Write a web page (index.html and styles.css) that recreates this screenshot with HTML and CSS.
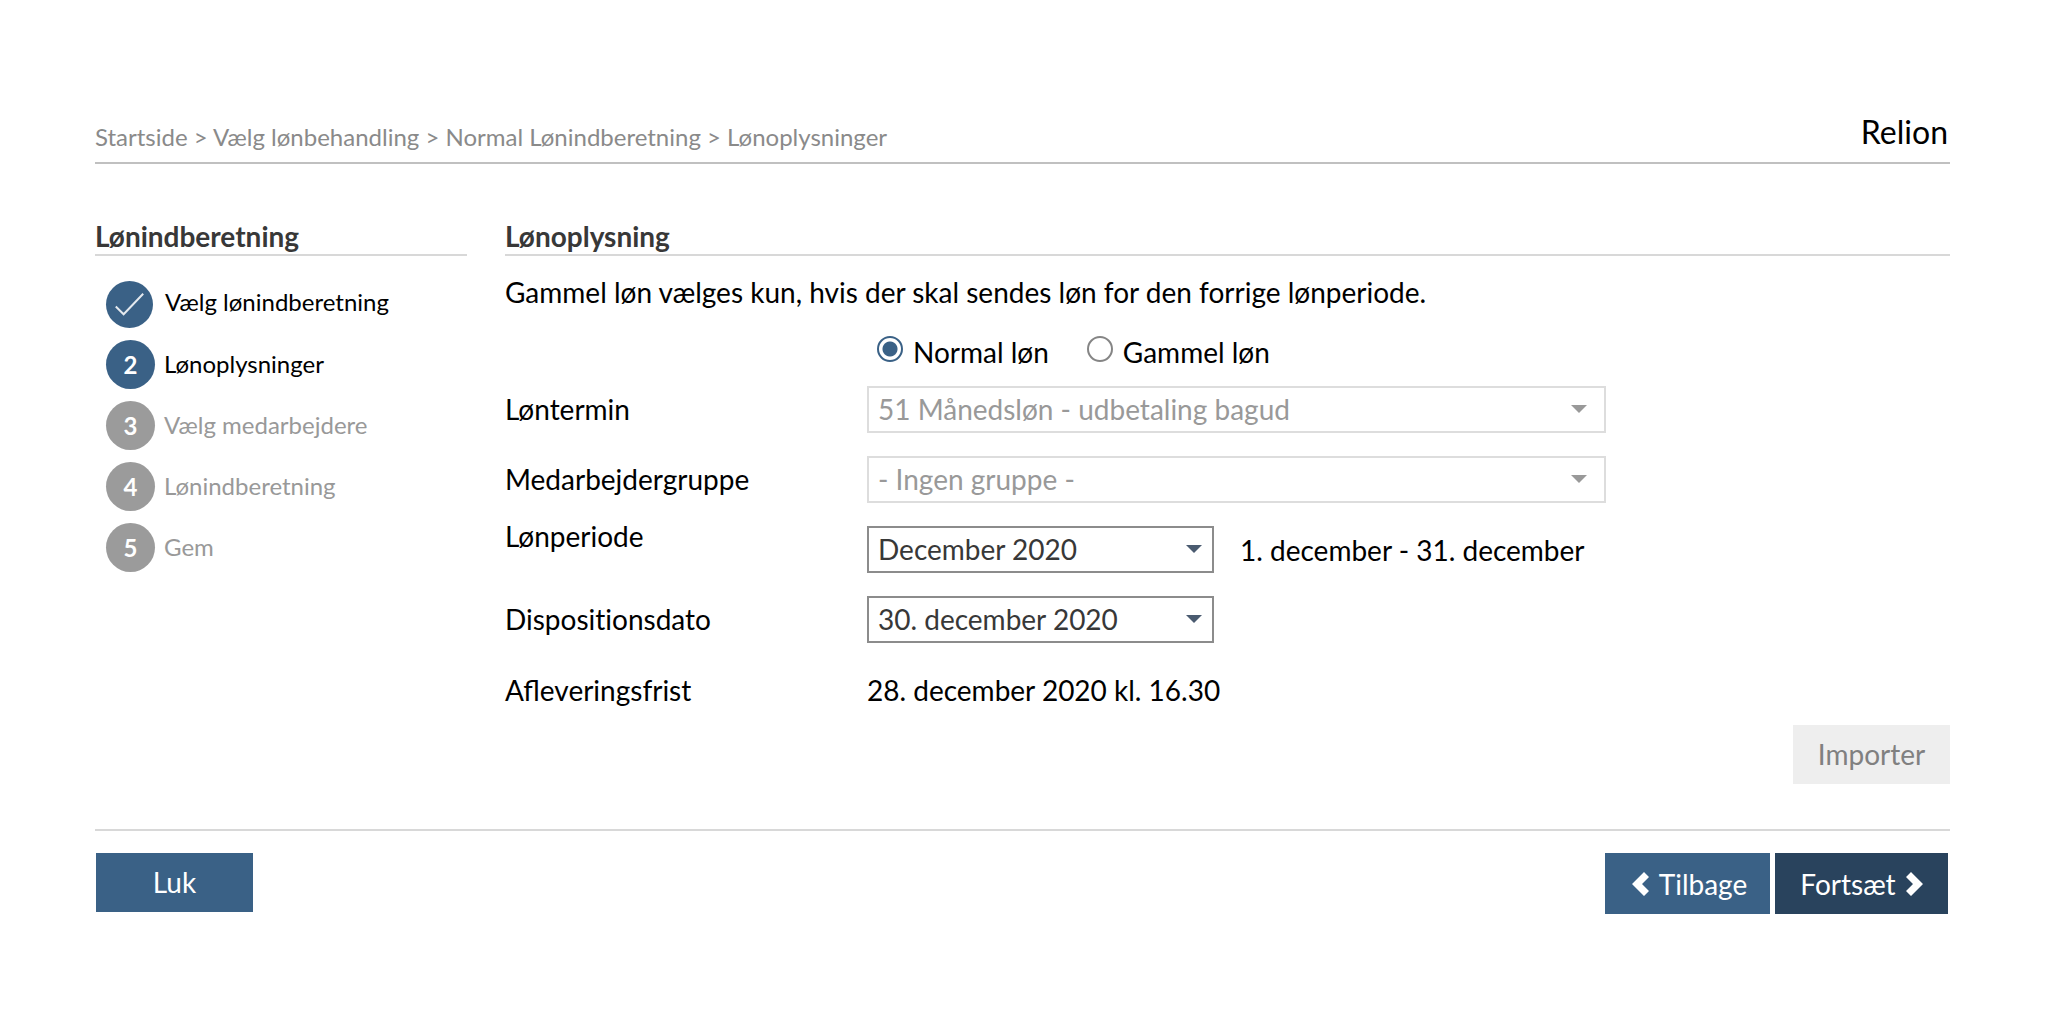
FILE: index.html
```html
<!DOCTYPE html>
<html lang="da">
<head>
  <meta charset="UTF-8" />
  <meta name="viewport" content="width=device-width, initial-scale=1.0"/>
  <title>Lønoplysninger</title>
  <link rel="stylesheet" href="styles.css">
</head>
<body>
  <div class="page">
    <header class="top">
      <nav class="breadcrumb">
        <a href="#">Startside</a> &gt; <a href="#">Vælg lønbehandling</a> &gt; <a href="#">Normal Lønindberetning</a> &gt; <a href="#">Lønoplysninger</a>
      </nav>
      <div class="company">Relion</div>
    </header>

    <div class="content">
      <aside class="sidebar">
        <h2>Lønindberetning</h2>
        <ol class="steps">
          <li class="done">
            <span class="circle">
              <svg viewBox="0 0 48 48"><path d="M10 26l8 8 20-21"/></svg>
            </span>
            <span class="step-name">Vælg lønindberetning</span>
          </li>
          <li class="active"><span class="circle">2</span><span class="step-name">Lønoplysninger</span></li>
          <li><span class="circle">3</span><span class="step-name">Vælg medarbejdere</span></li>
          <li><span class="circle">4</span><span class="step-name">Lønindberetning</span></li>
          <li><span class="circle">5</span><span class="step-name">Gem</span></li>
        </ol>
      </aside>

      <main class="main">
        <h2>Lønoplysning</h2>
        <p class="intro">Gammel løn vælges kun, hvis der skal sendes løn for den forrige lønperiode.</p>

        <form id="salaryForm">
          <div class="radios">
            <label><input type="radio" name="type" checked> Normal løn</label>
            <label><input type="radio" name="type"> Gammel løn</label>
          </div>

          <div class="fields">
            <label for="term">Løntermin</label>
            <div class="select wide disabled">
              <select id="term" disabled><option>51 Månedsløn - udbetaling bagud</option></select>
            </div>

            <label for="group">Medarbejdergruppe</label>
            <div class="select wide disabled">
              <select id="group" disabled><option>- Ingen gruppe -</option></select>
            </div>

            <label for="period" class="label-top">Lønperiode</label>
            <div class="period">
              <div class="select">
                <select id="period"><option>December 2020</option></select>
              </div>
              <span>1. december - 31. december</span>
            </div>

            <label for="date">Dispositionsdato</label>
            <div class="select">
              <select id="date"><option>30. december 2020</option></select>
            </div>

            <span>Afleveringsfrist</span>
            <span>28. december 2020 kl. 16.30</span>
          </div>

          <div class="import">
            <button type="button" class="btn btn-disabled" disabled>Importer</button>
          </div>
        </form>
      </main>
    </div>

    <footer class="bottom">
      <button type="button" class="btn">Luk</button>
      <div class="nav-buttons">
        <button type="button" class="btn btn-nav btn-back">
          <svg viewBox="0 0 17 24"><path d="M12 0l5 5-7 7 7 7-5 5L0 12z"/></svg>
          Tilbage
        </button>
        <button type="submit" form="salaryForm" class="btn btn-nav btn-next">
          Fortsæt
          <svg viewBox="0 0 17 24"><path d="M5 0L0 5l7 7-7 7 5 5 12-12z"/></svg>
        </button>
      </div>
    </footer>
  </div>
</body>
</html>
```

FILE: styles.css
```css
* {
  box-sizing: border-box;
}
body {
  margin: 0;
  background: #fff;
  color: #000;
  font-family: Lato, "Liberation Sans", sans-serif;
  font-size: 28px;
  line-height: 34px;
}
.page {
  padding: 112px 98px 96px 95px;
}
.top {
  display: flex;
  justify-content: space-between;
  align-items: flex-start;
  height: 52px;
  border-bottom: 2px solid #c0c0c0;
}
.breadcrumb {
  padding-top: 8px;
  font-size: 24px;
  line-height: 34px;
  color: #8a8a8a;
}
.breadcrumb a {
  color: inherit;
  text-decoration: none;
}
.company {
  padding: 3px 2px 0 0;
  font-size: 32px;
  line-height: 34px;
}
.content {
  display: flex;
  gap: 38px;
  margin-top: 56px;
}
.sidebar {
  flex: 0 0 372px;
}
.main {
  flex: 1;
}
h2 {
  margin: 0;
  padding-bottom: 2px;
  font-size: 28px;
  line-height: 32px;
  font-weight: bold;
  color: #383838;
  border-bottom: 2px solid #d8d8d8;
}

/* steps */
.steps {
  list-style: none;
  margin: 25px 0 0;
  padding: 0 0 0 11px;
  font-size: 24px;
}
.steps li {
  display: flex;
  align-items: center;
  gap: 9px;
  margin-bottom: 12px;
  color: #999;
}
.steps .done,
.steps .active {
  color: #000;
}
.steps .done {
  gap: 12px;
}
.step-name {
  padding-bottom: 2px;
}
.done .step-name {
  padding-bottom: 6px;
}
.circle {
  display: flex;
  align-items: center;
  justify-content: center;
  width: 49px;
  height: 49px;
  border-radius: 50%;
  background: #9b9b9b;
  color: #fff;
  font-weight: bold;
}
.done .circle,
.active .circle {
  background: #3a6186;
}
.done .circle {
  width: 47px;
  height: 47px;
}
.circle svg {
  width: 47px;
  height: 47px;
  fill: none;
  stroke: #e4e9ee;
  stroke-width: 2;
}

/* form */
.intro {
  margin: 19px 0 26px;
}
.radios {
  display: flex;
  gap: 38px;
  margin-left: 372px;
}
.radios label {
  display: flex;
  gap: 10px;
}
.radios input {
  appearance: none;
  width: 26px;
  height: 26px;
  margin: 1px 0 0;
  border: 2px solid #858585;
  border-radius: 50%;
}
.radios input:checked {
  border-color: #3a6186;
  background: radial-gradient(circle, #3a6186 7px, #fff 8px);
}
.fields {
  display: grid;
  grid-template-columns: 362px 1fr;
  grid-auto-rows: 47px;
  row-gap: 23px;
  align-items: center;
  margin-top: 17px;
}
.fields label {
  padding-bottom: 2px;
  font-variant-ligatures: none;
}
.fields .label-top {
  align-self: start;
  margin-top: -7px;
}
.select {
  position: relative;
  width: 347px;
  height: 47px;
}
.select.wide {
  width: 739px;
}
.select::after {
  content: "";
  position: absolute;
  top: 19px;
  right: 12px;
  border: 8px solid transparent;
  border-top-color: #4a5b70;
  border-bottom: 0;
  pointer-events: none;
}
.select.wide::after {
  right: 19px;
}
.select.disabled::after {
  border-top-color: #999;
}
.select select {
  appearance: none;
  width: 100%;
  height: 100%;
  padding: 0 40px 2px 9px;
  border: 2px solid #8c8c8c;
  border-radius: 0;
  background: #fff;
  color: #383838;
  font: inherit;
}
.select select:disabled {
  border-color: #ddd;
  color: #999;
  opacity: 1;
}
.period {
  display: flex;
  align-items: center;
  gap: 26px;
}
.import {
  display: flex;
  justify-content: flex-end;
  margin-top: 12px;
}

/* buttons */
.btn {
  width: 157px;
  height: 59px;
  padding: 0 0 2px;
  border: 0;
  background: #3a6186;
  color: #fff;
  font: inherit;
  cursor: pointer;
}
.btn-disabled {
  background: #eee;
  color: #808080;
  cursor: default;
}
.btn-nav {
  display: flex;
  align-items: center;
  justify-content: center;
  gap: 10px;
  width: 165px;
  height: 61px;
  padding: 0;
}
.btn-nav svg {
  width: 17px;
  height: 24px;
  fill: #fff;
}
.btn-back {
  padding-left: 4px;
}
.btn-next {
  width: 173px;
  background: #29435d;
}
.bottom {
  display: flex;
  justify-content: space-between;
  align-items: flex-start;
  margin-top: 45px;
  padding: 22px 2px 0 1px;
  border-top: 2px solid #d8d8d8;
}
.nav-buttons {
  display: flex;
  gap: 5px;
}
```
